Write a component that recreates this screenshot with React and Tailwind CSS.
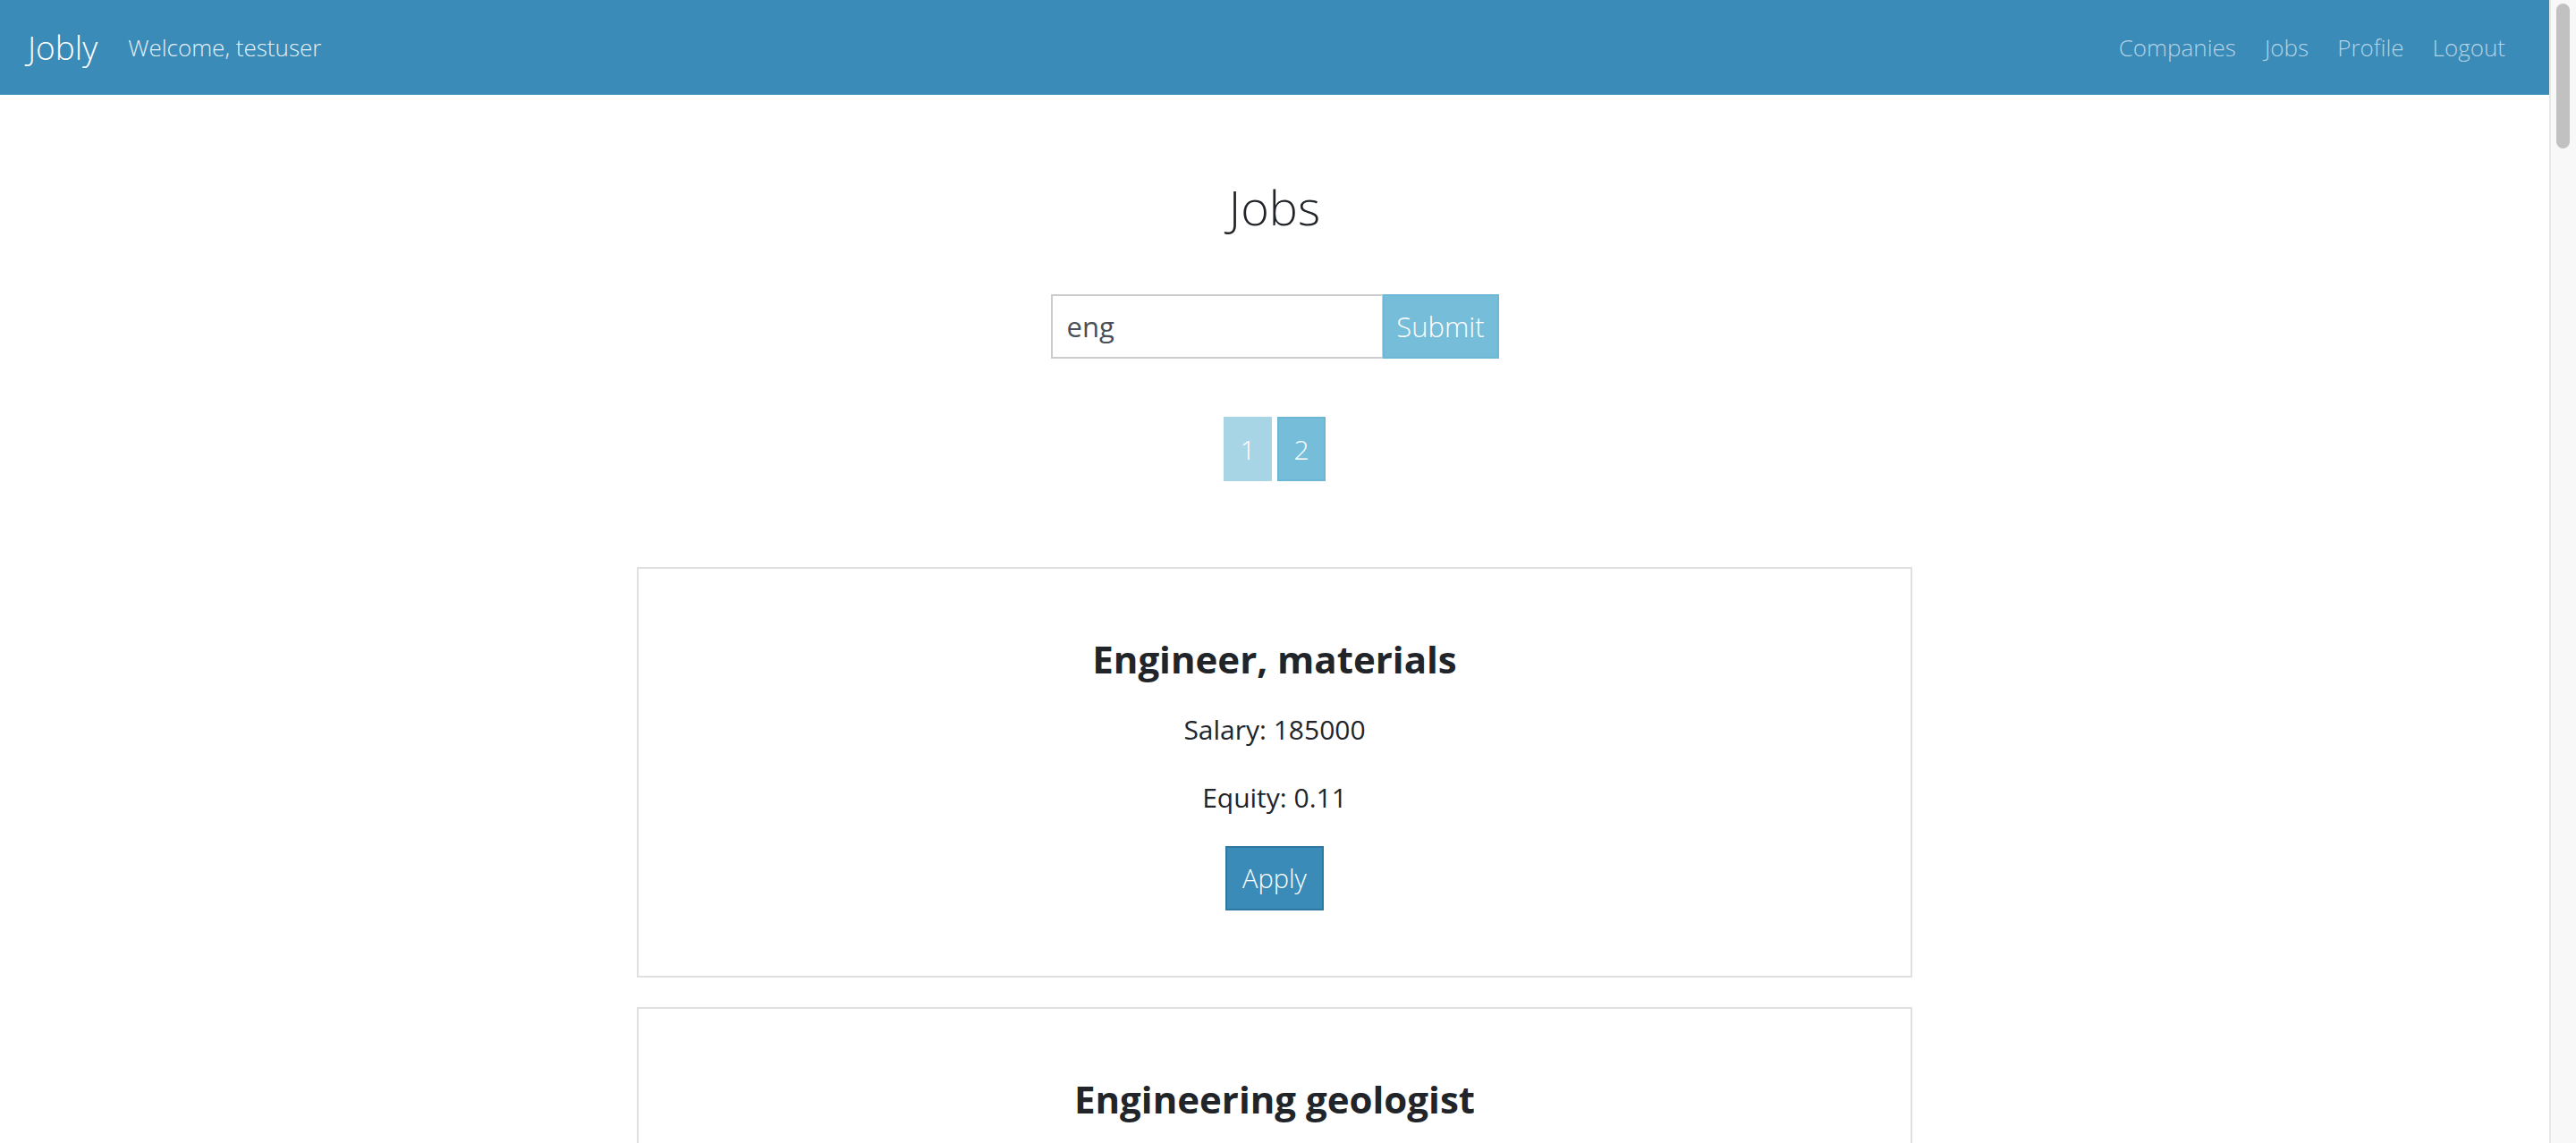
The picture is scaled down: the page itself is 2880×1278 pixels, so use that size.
import React from 'react';

// Jobs search page — navbar, search form, pager, job cards
const jobs = [
  { id: 1, title: 'Engineer, materials', salary: 185000, equity: '0.11' },
  { id: 2, title: 'Engineering geologist', salary: 120000, equity: '0.04' },
];

const font = { fontFamily: '"Open Sans", "Noto Sans", sans-serif' };

function NavBar() {
  return (
    <nav className="h-[106px] shrink-0 bg-[#3a8bb7] flex items-center pl-[31px] pr-[49px]">
      <a className="text-[37px] font-light text-white mr-[34px]">Jobly</a>
      <span className="text-[26px] font-light text-[#e3eff6]">Welcome, testuser</span>
      <div className="ml-auto flex items-center gap-[32px] text-[26px] font-light text-[#b3d3e5]">
        <a>Companies</a>
        <a>Jobs</a>
        <a>Profile</a>
        <a>Logout</a>
      </div>
    </nav>
  );
}

function SearchForm() {
  return (
    <form className="flex justify-center mt-[66px]" onSubmit={(e) => e.preventDefault()}>
      <input
        defaultValue="eng"
        className="w-[372px] h-[72px] border-2 border-[#cccccc] pl-[16px] text-[31px] text-[#495057] outline-none"
      />
      <button className="w-[130px] h-[72px] -ml-px bg-[#76bdd9] border-2 border-[#6db8d6] text-[31px] font-light text-white">
        Submit
      </button>
    </form>
  );
}

function Pager() {
  return (
    <div className="flex justify-center gap-[6px] mt-[65px]">
      <button className="w-[54px] h-[72px] bg-[#a8d5e6] text-[30px] font-light text-white">1</button>
      <button className="w-[54px] h-[72px] bg-[#76bdd9] border-2 border-[#6cb6d5] text-[30px] font-light text-white">2</button>
    </div>
  );
}

function JobCard({ job }) {
  return (
    <div className="w-[1426px] border-2 border-[#e0e0e0] flex flex-col items-center pt-[76px] pb-[73px] text-[#212529]">
      <h5 className="text-[42px] leading-[50px] font-bold">{job.title}</h5>
      <p className="text-[30px] leading-[44px] mt-[32px]">Salary: {job.salary}</p>
      <p className="text-[30px] leading-[44px] mt-[32px]">Equity: {job.equity}</p>
      <button className="mt-[32px] w-[110px] h-[72px] bg-[#3a8bb7] border-2 border-[#2d77a0] text-[29px] font-light text-white">
        Apply
      </button>
    </div>
  );
}

export default function App() {
  return (
    <div className="flex h-[1278px] w-full overflow-hidden bg-white" style={font}>
      <div className="flex-1 min-w-0 flex flex-col overflow-hidden">
        <NavBar />
        <h2 className="text-center text-[54px] leading-[64px] font-light text-[#212529] mt-[93px]">Jobs</h2>
        <SearchForm />
        <Pager />
        <div className="flex flex-col items-center gap-[33px] mt-[96px]">
          {jobs.map((job) => (
            <JobCard key={job.id} job={job} />
          ))}
        </div>
      </div>
      {/* page scrollbar */}
      <div className="w-[30px] shrink-0 bg-[#f8f8f8] border-l-2 border-[#e8e8e8] pt-[4px] pl-[6px]">
        <div className="w-[15px] h-[162px] rounded-full bg-[#c1c1c1]" />
      </div>
    </div>
  );
}
